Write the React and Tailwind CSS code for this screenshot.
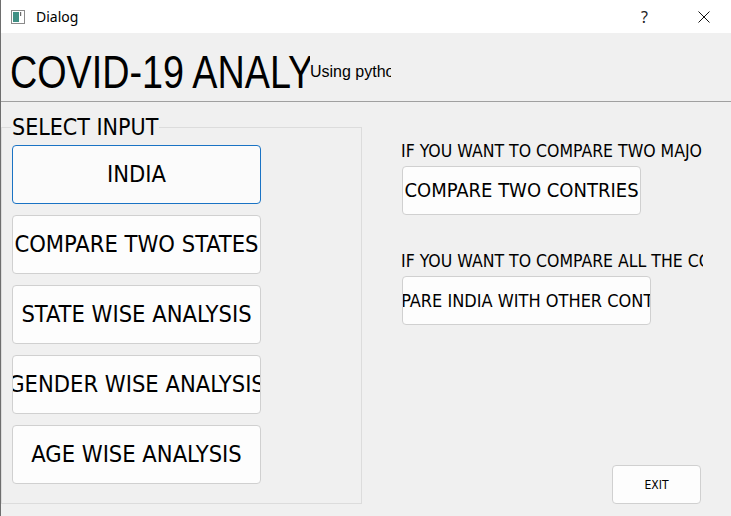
import React from "react";

const btn =
  "flex items-center justify-center overflow-hidden whitespace-nowrap border rounded-[4px] text-black leading-none";
const normal = "bg-[#fdfdfd] border-[#d0d0d0]";

const leftButtons = [
  "COMPARE TWO STATES",
  "STATE WISE ANALYSIS",
  "GENDER WISE ANALYSIS",
  "AGE WISE ANALYSIS",
];

const WindowIcon = () => (
  <svg width="14" height="14" viewBox="0 0 14 14">
    <rect x="0.5" y="0.5" width="13" height="13" fill="#ffffff" stroke="#8a8a8a" />
    <rect x="2" y="2" width="6" height="10" fill="#3f8f84" />
    <rect x="9" y="2" width="1.2" height="4" fill="#6a6a6a" />
  </svg>
);

const App = () => {
  return (
    <div className="w-[731px] h-[516px] overflow-hidden bg-[#f0f0f0] border-l border-[#6e6e6e] flex flex-col font-['DejaVu_Sans_Condensed','DejaVu_Sans',sans-serif]">
      {/* Barra de título */}
      <div className="h-[33px] bg-white flex items-center pl-[10px] shrink-0">
        <WindowIcon />
        <span className="ml-[11px] text-[14px] text-black font-['Noto_Sans',sans-serif] leading-none">
          Dialog
        </span>
        <span className="ml-auto text-[16px] text-[#222] font-['Noto_Sans',sans-serif] leading-none">
          ?
        </span>
        <svg className="ml-[50px] mr-[21px]" width="12" height="12" viewBox="0 0 12 12">
          <path d="M0.5 0.5 L11.5 11.5 M11.5 0.5 L0.5 11.5" stroke="#111" strokeWidth="1" />
        </svg>
      </div>

      {/* Encabezado */}
      <div className="h-[69px] shrink-0 border-b border-[#a0a0a0] flex items-start pt-[16px] pl-[9px]">
        <div className="w-[300px] overflow-hidden whitespace-nowrap text-[46px] leading-none text-black font-['Liberation_Sans',sans-serif]">
          <span className="inline-block origin-left scale-x-[0.82]">COVID-19 ANALYSIS</span>
        </div>
        <div className="w-[81px] overflow-hidden whitespace-nowrap text-[16px] leading-none text-black mt-[15px] font-['Liberation_Sans',sans-serif]">
          Using python
        </div>
      </div>

      {/* Cuerpo */}
      <div className="flex-1 flex">
        <fieldset className="mt-[14px] w-[361px] h-[388px] border border-[#dcdcdc] shrink-0">
          <legend className="ml-[9px] px-[1px] text-[23px] leading-none text-black">
            SELECT INPUT
          </legend>
          <div className="flex flex-col gap-[11px] mt-[6px] ml-[10px]">
            <button className={`${btn} w-[249px] h-[59px] text-[23.5px] border-[#1a73c4] bg-[#fbfbfb]`}>
              INDIA
            </button>
            {leftButtons.map((label) => (
              <button key={label} className={`${btn} ${normal} w-[249px] h-[59px] text-[23.5px]`}>
                {label}
              </button>
            ))}
          </div>
        </fieldset>

        <div className="flex-1 flex flex-col pl-[39px] pt-[41px]">
          <div className="w-[302px] overflow-hidden whitespace-nowrap text-[17.5px] leading-none text-black">
            IF YOU WANT TO COMPARE TWO MAJOR COUNTRIES
          </div>
          <button className={`${btn} ${normal} mt-[5px] ml-[1px] w-[239px] h-[49px] text-[20px]`}>
            COMPARE TWO CONTRIES
          </button>
          <div className="mt-[38px] w-[302px] overflow-hidden whitespace-nowrap text-[17.5px] leading-none text-black">
            IF YOU WANT TO COMPARE ALL THE COUNTRIES
          </div>
          <button className={`${btn} ${normal} mt-[6px] ml-[1px] w-[249px] h-[49px] text-[18px]`}>
            COMPARE INDIA WITH OTHER CONTRIES
          </button>
          <button className={`${btn} ${normal} mt-auto self-end mr-[30px] mb-[12px] w-[89px] h-[39px] text-[12px]`}>
            EXIT
          </button>
        </div>
      </div>
    </div>
  );
};

export default App;
